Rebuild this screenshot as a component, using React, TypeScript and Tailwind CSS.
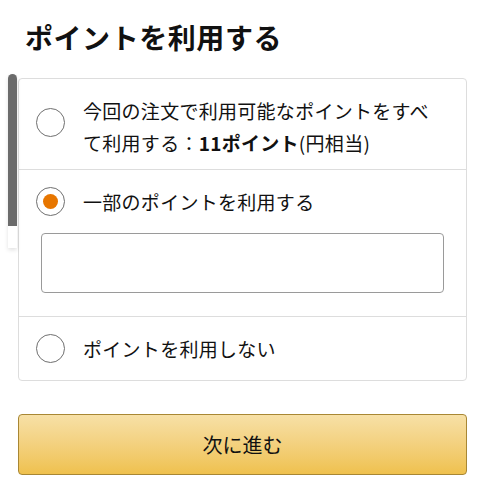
import { useState } from 'react';

const font = { fontFamily: '"Noto Sans CJK JP", "Noto Sans", sans-serif' };

function Radio({ checked }: { checked: boolean }) {
  return (
    <span className="flex h-[29px] w-[29px] flex-shrink-0 items-center justify-center rounded-full border border-[#6f6f6f] bg-white">
      {checked && <span className="h-[15px] w-[15px] rounded-full bg-[#e77600]" />}
    </span>
  );
}

export default function App() {
  const [choice, setChoice] = useState<'all' | 'part' | 'none'>('part');

  return (
    <div className="relative min-h-[500px] w-[485px] bg-white text-[#111]" style={font}>
      {/* scroll indicator overlay */}
      <div className="absolute left-[8px] top-[74px] flex h-[174px] w-[9px] flex-col overflow-hidden rounded-t-full shadow-[0_2px_4px_rgba(0,0,0,0.12)]">
        <div className="h-[152px] bg-[#6b6b6b]" />
        <div className="flex-1 bg-white" />
      </div>

      <div className="px-[18px] pt-[16px]">
        <h1 className="pl-[7px] text-[28px] font-bold leading-[42px] tracking-[0.02em]">ポイントを利用する</h1>

        <div className="mt-[20px] rounded-[4px] border border-[#dddddd] bg-white">
          <button
            type="button"
            onClick={() => setChoice('all')}
            className="flex h-[91px] w-full items-start gap-[18px] border-b border-[#dddddd] pl-[17px] pr-[24px] text-left"
          >
            <span className="mt-[29px]">
              <Radio checked={choice === 'all'} />
            </span>
            <span className="pt-[16px] text-[19px] leading-[32px] tracking-[0.015em]">
              今回の注文で利用可能なポイントをすべて利用する：<b className="font-bold">11ポイント</b>(円相当)
            </span>
          </button>

          <div className="border-b border-[#dddddd] pb-[23px]">
            <button
              type="button"
              onClick={() => setChoice('part')}
              className="flex h-[63px] w-full items-center gap-[18px] pl-[17px] text-left"
            >
              <Radio checked={choice === 'part'} />
              <span className="text-[19px] leading-[32px] tracking-[0.015em]">一部のポイントを利用する</span>
            </button>
            <div className="px-[22px]">
              <input
                type="text"
                className="block h-[60px] w-full rounded-[4px] border border-[#9a9a9a] bg-white px-3 text-[19px] outline-none"
              />
            </div>
          </div>

          <button
            type="button"
            onClick={() => setChoice('none')}
            className="flex h-[63px] w-full items-center gap-[18px] pl-[17px] text-left"
          >
            <Radio checked={choice === 'none'} />
            <span className="text-[19px] leading-[32px] tracking-[0.015em]">ポイントを利用しない</span>
          </button>
        </div>

        <button
          type="button"
          className="mt-[33px] flex h-[61px] w-full items-center justify-center rounded-[4px] border border-[#a88734] bg-gradient-to-b from-[#f7e0a6] to-[#efc14d] text-[20px] text-[#111]"
        >
          次に進む
        </button>
      </div>
    </div>
  );
}
